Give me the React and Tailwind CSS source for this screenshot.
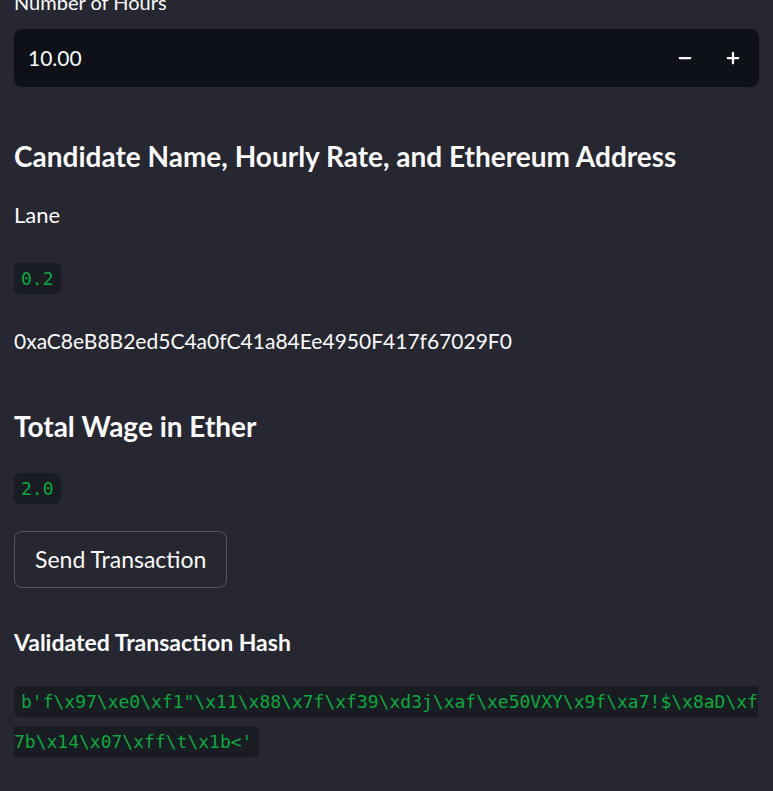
import { Minus, Plus } from "lucide-react";

const hash =
  "b'f\\x97\\xe0\\xf1\"\\x11\\x88\\x7f\\xf39\\xd3j\\xaf\\xe50VXY\\x9f\\xa7!$\\x8aD\\xf7b\\x14\\x07\\xff\\t\\x1b<'";

function Code({ children, className = "" }) {
  return (
    <code
      className={
        "rounded-md bg-[#1a1c23] px-[7px] py-[5px] text-[18px] text-[#09ab3b] " +
        className
      }
      style={{ fontFamily: '"DejaVu Sans Mono", "Liberation Mono", monospace' }}
    >
      {children}
    </code>
  );
}

export default function App() {
  return (
    <div
      className="min-h-[791px] overflow-hidden bg-[#262730] px-[14px] text-[#fafafa]"
      style={{ fontFamily: 'Lato, "Noto Sans", sans-serif' }}
    >
      <div className="-mt-[10px] flex flex-col">
        <label className="text-[20px] leading-[24px]">Number of Hours</label>

        <div className="mt-[15px] flex h-[58px] items-center rounded-lg bg-[#0f1118] pl-[14px] pr-[2px]">
          <span className="flex-1 text-[21px]">10.00</span>
          <button className="flex h-full w-[48px] items-center justify-center">
            <Minus className="h-[18px] w-[18px]" strokeWidth={3} />
          </button>
          <button className="flex h-full w-[48px] items-center justify-center">
            <Plus className="h-[18px] w-[18px]" strokeWidth={3} />
          </button>
        </div>

        <h3 className="mt-[51px] text-[28px] font-bold leading-[36px]">
          Candidate Name, Hourly Rate, and Ethereum Address
        </h3>

        <p className="mt-[26px] text-[22px] leading-[30px]">Lane</p>

        <div className="mt-[34px] leading-[30px]">
          <Code>0.2</Code>
        </div>

        <p className="mt-[32px] text-[21px] leading-[30px]">
          0xaC8eB8B2ed5C4a0fC41a84Ee4950F417f67029F0
        </p>

        <h3 className="mt-[52px] text-[28px] font-bold leading-[36px]">
          Total Wage in Ether
        </h3>

        <div className="mt-[30px] leading-[30px]">
          <Code>2.0</Code>
        </div>

        <div className="mt-[27px]">
          <button className="h-[57px] rounded-lg border border-[#55565e] bg-[#262730] px-[20px] text-[23px]">
            Send Transaction
          </button>
        </div>

        <h4 className="mt-[40px] text-[23px] font-bold leading-[28px]">
          Validated Transaction Hash
        </h4>

        <div className="mt-[26px] break-all leading-[40px]">
          <Code>{hash}</Code>
        </div>
      </div>
    </div>
  );
}
